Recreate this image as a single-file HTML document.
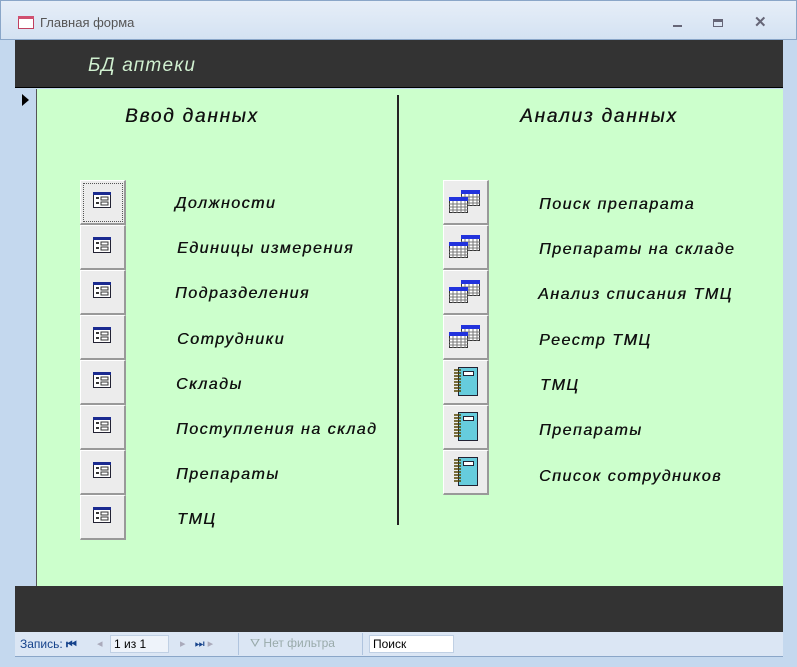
<!DOCTYPE html>
<html><head><meta charset="utf-8"><style>
*{margin:0;padding:0;box-sizing:border-box}
body{width:797px;height:667px;background:#c4d8ee;position:relative;overflow:hidden;font-family:"Liberation Sans",sans-serif}
.abs{position:absolute}
.title{left:0;top:0;width:797px;height:40px;background:linear-gradient(#e6eef8,#d4e2f2);border:1px solid #8aa6c8}
.lbl{position:absolute;font-style:italic;font-size:16px;color:#111;white-space:nowrap;letter-spacing:1.5px;text-shadow:0.4px 0 0 #111}
.btn{position:absolute;width:46px;height:45px;background:#ececec;border-top:1px solid #fff;border-left:1px solid #fff;border-right:2px solid #999;border-bottom:2px solid #999}
.btn svg{position:absolute;left:12px;top:11px}
</style></head><body>
<div class="abs title"></div>
<div class="abs" style="left:18px;top:16px;width:16px;height:13px;border:1px solid #c04060;background:#fff"></div>
<div class="abs" style="left:18px;top:16px;width:16px;height:3px;background:#d05070"></div>
<div class="abs" style="left:40px;top:15px;font-size:13px;color:#555">Главная форма</div>
<div class="abs" style="left:673px;top:25px;width:9px;height:2px;background:#667"></div>
<div class="abs" style="left:713px;top:19px;width:10px;height:8px;border:1px solid #667;border-top:3px solid #667"></div>
<div class="abs" style="left:754px;top:13px;font-size:15px;color:#667;font-weight:bold">✕</div>
<div class="abs" style="left:15px;top:40px;width:768px;height:48px;background:#333;border-bottom:1px solid #000"></div>
<div class="abs" style="left:88px;top:55px;font-size:19px;font-style:italic;color:#d0f0d0;letter-spacing:1.2px">БД аптеки</div>
<div class="abs" style="left:15px;top:89px;width:22px;height:497px;background:#c4d8ee;border-right:1px solid #555"></div>
<div class="abs" style="left:22px;top:94px;width:0;height:0;border-left:7px solid #000;border-top:6px solid transparent;border-bottom:6px solid transparent"></div>
<div class="abs" style="left:37px;top:89px;width:746px;height:497px;background:#ccffcc"></div>
<div class="abs" style="left:397px;top:95px;width:2px;height:430px;background:#222"></div>
<div class="lbl" style="left:125px;top:106px;font-size:19px;letter-spacing:1.8px">Ввод данных</div>
<div class="lbl" style="left:520px;top:106px;font-size:19px;letter-spacing:1.8px">Анализ данных</div>

<svg width="0" height="0" style="position:absolute"><defs>
<g id="fm"><rect x="0.5" y="0.5" width="17" height="15" fill="#fff" stroke="#223"/><rect x="0" y="0" width="18" height="3" fill="#1a2a90"/><rect x="3" y="5" width="3" height="2" fill="#333"/><rect x="8" y="5" width="7" height="3" fill="none" stroke="#333"/><rect x="3" y="10" width="3" height="2" fill="#333"/><rect x="8" y="10" width="7" height="3" fill="none" stroke="#333"/></g>
<g id="tb"><rect x="12.5" y="1.5" width="18" height="15" fill="#fff" stroke="#333"/><rect x="12" y="1" width="19" height="4" fill="#2233dd"/><path d="M12 8h19M12 11h19M12 14h19M16 5v12M20 5v12M24 5v12M28 5v12" stroke="#777"/>
<rect x="0.5" y="8.5" width="18" height="15" fill="#fff" stroke="#333"/><rect x="0" y="8" width="19" height="4" fill="#2233dd"/><path d="M0 15h19M0 18h19M0 21h19M4 12v12M8 12v12M12 12v12M16 12v12" stroke="#777"/></g>
<g id="nb"><rect x="5.5" y="0.5" width="19" height="28" fill="#66ccdd" stroke="#223"/><rect x="10.5" y="4.5" width="10" height="4" fill="#fff" stroke="#223"/><path d="M1 3h7M1 6h7M1 9h7M1 12h7M1 15h7M1 18h7M1 21h7M1 24h7" stroke="#554400" stroke-width="1.5"/></g>
</defs></svg>

<div class="btn" style="left:80px;top:180px;outline:1px dotted #555;outline-offset:-4px"><svg width="18" height="16"><use href="#fm"/></svg></div>
<div class="btn" style="left:80px;top:225px"><svg width="18" height="16"><use href="#fm"/></svg></div>
<div class="btn" style="left:80px;top:270px"><svg width="18" height="16"><use href="#fm"/></svg></div>
<div class="btn" style="left:80px;top:315px"><svg width="18" height="16"><use href="#fm"/></svg></div>
<div class="btn" style="left:80px;top:360px"><svg width="18" height="16"><use href="#fm"/></svg></div>
<div class="btn" style="left:80px;top:405px"><svg width="18" height="16"><use href="#fm"/></svg></div>
<div class="btn" style="left:80px;top:450px"><svg width="18" height="16"><use href="#fm"/></svg></div>
<div class="btn" style="left:80px;top:495px"><svg width="18" height="16"><use href="#fm"/></svg></div>

<div class="lbl" style="left:175px;top:195px">Должности</div>
<div class="lbl" style="left:177px;top:240px">Единицы измерения</div>
<div class="lbl" style="left:175px;top:285px">Подразделения</div>
<div class="lbl" style="left:177px;top:331px">Сотрудники</div>
<div class="lbl" style="left:176px;top:376px">Склады</div>
<div class="lbl" style="left:176px;top:421px">Поступления на склад</div>
<div class="lbl" style="left:176px;top:466px">Препараты</div>
<div class="lbl" style="left:177px;top:511px">ТМЦ</div>

<div class="btn" style="left:443px;top:180px"><svg width="32" height="25" style="left:5px;top:8px"><use href="#tb"/></svg></div>
<div class="btn" style="left:443px;top:225px"><svg width="32" height="25" style="left:5px;top:8px"><use href="#tb"/></svg></div>
<div class="btn" style="left:443px;top:270px"><svg width="32" height="25" style="left:5px;top:8px"><use href="#tb"/></svg></div>
<div class="btn" style="left:443px;top:315px"><svg width="32" height="25" style="left:5px;top:8px"><use href="#tb"/></svg></div>
<div class="btn" style="left:443px;top:360px"><svg width="26" height="30" style="left:9px;top:6px"><use href="#nb"/></svg></div>
<div class="btn" style="left:443px;top:405px"><svg width="26" height="30" style="left:9px;top:6px"><use href="#nb"/></svg></div>
<div class="btn" style="left:443px;top:450px"><svg width="26" height="30" style="left:9px;top:6px"><use href="#nb"/></svg></div>

<div class="lbl" style="left:539px;top:196px">Поиск препарата</div>
<div class="lbl" style="left:539px;top:241px">Препараты на складе</div>
<div class="lbl" style="left:538px;top:286px">Анализ списания ТМЦ</div>
<div class="lbl" style="left:539px;top:332px">Реестр ТМЦ</div>
<div class="lbl" style="left:540px;top:377px">ТМЦ</div>
<div class="lbl" style="left:539px;top:422px">Препараты</div>
<div class="lbl" style="left:539px;top:468px">Список сотрудников</div>

<div class="abs" style="left:15px;top:586px;width:768px;height:46px;background:#333"></div>
<div class="abs" style="left:15px;top:632px;width:768px;height:25px;background:#dbe6f4;border-bottom:1px solid #8aa6c8"></div>
<div class="abs" style="left:20px;top:637px;font-size:12px;color:#15428b">Запись: <b>⏮</b></div>
<div class="abs" style="left:97px;top:637px;font-size:11px;color:#aab">◂</div>
<div class="abs" style="left:110px;top:635px;width:59px;height:18px;background:#eef3fa;border:1px solid #c0d0e4;font-size:12px;padding:1px 3px">1 из 1</div>
<div class="abs" style="left:180px;top:637px;font-size:11px;color:#aab">▸ &nbsp; <span style="color:#15428b">⏭</span> ▸</div>
<div class="abs" style="left:238px;top:633px;width:1px;height:22px;background:#b0c4de"></div>
<div class="abs" style="left:250px;top:636px;font-size:12px;color:#9aa">⛛ Нет фильтра</div>
<div class="abs" style="left:362px;top:633px;width:1px;height:22px;background:#b0c4de"></div>
<div class="abs" style="left:369px;top:635px;width:85px;height:18px;background:#fff;border:1px solid #c0d0e4;font-size:12px;padding:1px 3px">Поиск</div>
</body></html>
